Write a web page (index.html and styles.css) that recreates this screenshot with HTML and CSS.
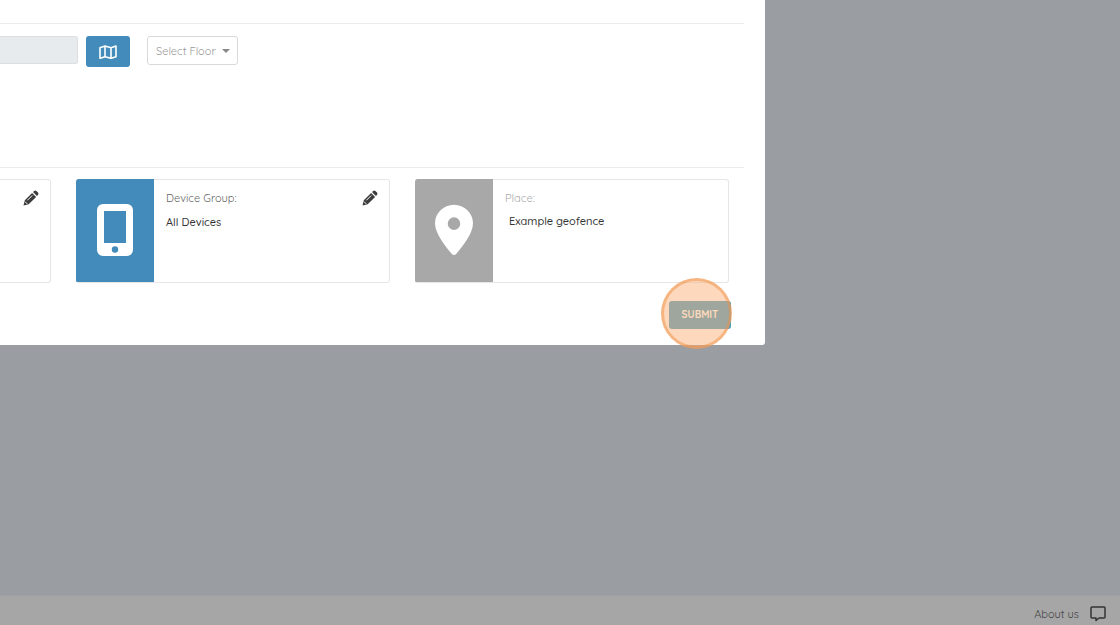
FILE: index.html
```
<!DOCTYPE html>
<html lang="en">
<head>
<meta charset="utf-8">
<meta name="viewport" content="width=device-width, initial-scale=1">
<title>Device alert setup</title>
<link rel="stylesheet" href="styles.css">
</head>
<body>
<main class="modal">
  <section class="location">
    <input class="location-input" type="text" aria-label="Location" disabled>
    <button class="map-button" type="button" aria-label="Open map">
      <svg class="map-icon" viewBox="0 0 18 14" aria-hidden="true"><path d="M1 2.8 6 1v10.7L1 13.3zM6 1l6 1.8v10.5l-6-1.6M12 2.8 17 1v10.7l-5 1.6"/></svg>
    </button>
    <div class="floor">
      <select class="floor-select" aria-label="Select Floor"><option>Select Floor</option></select>
      <svg class="caret" viewBox="0 0 8 4" aria-hidden="true"><path d="M0 0h8L4 4z"/></svg>
    </div>
  </section>
  <section class="cards">
    <article class="card card-end">
      <button class="edit" type="button" aria-label="Edit">
        <svg class="pencil" viewBox="0 0 16 16" aria-hidden="true"><path class="ink" d="M.5 15.5 1.8 10.3 9.1 3l4 4-7.4 7.3zM10 2.1 11.2.9Q12.3.1 13.4 1L15 2.6Q16 3.8 15 4.9L13.9 6z"/><path class="shine" d="M4.4 10.3 9.2 5.5M2.1 11.7l2.2 2.2"/></svg>
      </button>
    </article>
    <article class="card">
      <div class="tile tile-blue">
        <svg class="phone" viewBox="0 0 36 52" aria-hidden="true"><path d="M6 0h24a6 6 0 0 1 6 6v40a6 6 0 0 1-6 6H6a6 6 0 0 1-6-6V6a6 6 0 0 1 6-6zM7 7v32h22V7zM18 42.3a3.2 3.2 0 1 0 0 6.4 3.2 3.2 0 0 0 0-6.4z"/></svg>
      </div>
      <div class="details">
        <h2 class="label">Device Group:</h2>
        <p class="value">All Devices</p>
      </div>
      <button class="edit" type="button" aria-label="Edit device group">
        <svg class="pencil" viewBox="0 0 16 16" aria-hidden="true"><path class="ink" d="M.5 15.5 1.8 10.3 9.1 3l4 4-7.4 7.3zM10 2.1 11.2.9Q12.3.1 13.4 1L15 2.6Q16 3.8 15 4.9L13.9 6z"/><path class="shine" d="M4.4 10.3 9.2 5.5M2.1 11.7l2.2 2.2"/></svg>
      </button>
    </article>
    <article class="card">
      <div class="tile tile-grey">
        <svg class="pin" viewBox="0 0 40 53" aria-hidden="true"><path d="M20 0C31 0 40 8.7 40 19.5 40 30 29 44 22.5 51.5Q20 54 17.5 51.5C11 44 0 30 0 19.5 0 8.7 9 0 20 0zM20 13.2a6.6 6.6 0 1 0 0 13.2 6.6 6.6 0 0 0 0-13.2z"/></svg>
      </div>
      <div class="details">
        <h2 class="label label-muted">Place:</h2>
        <p class="value value-inset">Example geofence</p>
      </div>
    </article>
  </section>
  <div class="actions">
    <div class="submit-wrap">
      <button class="submit" type="submit">SUBMIT</button>
      <span class="highlight"></span>
    </div>
  </div>
</main>
<footer class="footer">
  <a class="about" href="#">About us</a>
  <button class="chat" type="button" aria-label="Feedback">
    <svg class="chat-icon" viewBox="0 0 16 16" aria-hidden="true"><path d="M2 1h12q1 0 1 1v9q0 1-1 1H9L6 14.5V12H2q-1 0-1-1V2q0-1 1-1z"/></svg>
  </button>
</footer>
</body>
</html>
```
FILE: styles.css
```
* { box-sizing: border-box; }

body {
  margin: 0;
  min-height: 100vh;
  display: flex;
  flex-direction: column;
  background: #9a9da1;
  color: #444;
  font-family: Quicksand, Lato, sans-serif;
  font-size: 11px;
  line-height: 16px;
}

button {
  padding: 0;
  border: 0;
  background: none;
  font: inherit;
  cursor: pointer;
}

svg { display: block; }

.modal {
  margin-right: 355px;
  padding: 23px 0 16px;
  background: #fff;
  border-radius: 0 0 3px 0;
}

.location {
  display: flex;
  align-items: flex-start;
  min-height: 144px;
  margin-right: 21px;
  padding-top: 12px;
  border-top: 1px solid #ebebeb;
}

.location-input {
  width: 78px;
  height: 28px;
  border: 1px solid #dcdfe2;
  border-left: 0;
  border-radius: 0 3px 3px 0;
  background: #e7ebee;
}

.map-button {
  display: grid;
  place-items: center;
  width: 44px;
  height: 31px;
  margin: 0 17px 0 8px;
  border-radius: 3px;
  background: #428bbb;
}

.map-icon {
  width: 18px;
  height: 14px;
  fill: none;
  stroke: #fff;
  stroke-width: 1.6;
  stroke-linejoin: round;
}

.floor {
  display: grid;
  align-items: center;
}

.floor-select,
.caret { grid-area: 1 / 1; }

.floor-select {
  appearance: none;
  width: 91px;
  height: 29px;
  padding: 0 8px;
  border: 1px solid #d9d9d9;
  border-radius: 3px;
  background: #fff;
  color: #999;
  font: inherit;
}

.caret {
  width: 8px;
  height: 4px;
  margin-right: 8px;
  justify-self: end;
  fill: #888;
  pointer-events: none;
}

.cards {
  position: relative;
  display: grid;
  grid-template-columns: 51px 1fr 1fr;
  gap: 25px;
  padding: 12px 36px 0 0;
}

.cards::before {
  content: "";
  position: absolute;
  top: 0;
  left: 0;
  right: 21px;
  border-top: 1px solid #ebebeb;
}

.card {
  display: flex;
  min-height: 104px;
  border-radius: 3px;
  box-shadow: inset 0 0 0 1px #e6e6e6;
  overflow: hidden;
}

.card-end {
  border: 1px solid #e6e6e6;
  border-left: 0;
  border-radius: 0 3px 3px 0;
  box-shadow: none;
}

.card-end .edit { margin: 10px 11px 0 auto; }

.tile {
  display: grid;
  justify-items: center;
  align-content: start;
  width: 78px;
  margin-bottom: 1px;
  padding-top: 25px;
}

.tile-blue { background: #428bbb; }
.tile-grey { background: #a8a8a8; }

.phone,
.pin { fill: #fff; fill-rule: evenodd; }

.phone { width: 36px; height: 52px; }
.pin { width: 38px; height: 52px; }

.details { padding: 11px 12px; }

.label,
.value {
  margin: 0;
  font-size: 11px;
}

.label { color: #666; font-weight: 400; }
.label-muted { color: #aaa; }

.value {
  margin-top: 8px;
  color: #333;
  font-weight: 500;
}

.value-inset {
  margin-top: 7px;
  padding-left: 4px;
}

.edit {
  align-self: flex-start;
  margin: 11px 12px 0 auto;
}

.pencil { width: 16px; height: 16px; }
.ink { fill: #3c3c3c; }
.shine { fill: none; stroke: #fff; stroke-width: 1; }

.actions {
  display: flex;
  justify-content: flex-end;
  padding: 18px 34px 0 0;
}

.submit-wrap { position: relative; }

.submit {
  display: block;
  width: 62px;
  height: 28px;
  border-radius: 3px;
  background: #409ac0;
  color: #fff;
  font-size: 10px;
  font-weight: 700;
}

.highlight {
  position: absolute;
  top: -23px;
  left: -8px;
  width: 71px;
  height: 71px;
  border: 3px solid rgba(240, 145, 70, 0.5);
  border-radius: 50%;
  background: rgba(252, 178, 122, 0.5);
  pointer-events: none;
}

.footer {
  display: flex;
  align-items: center;
  justify-content: flex-end;
  gap: 11px;
  min-height: 30px;
  margin-top: auto;
  padding: 6px 14px 0 0;
  border-top: 1px solid #a0a0a0;
  background: #a6a6a6;
}

.about {
  color: #444;
  text-decoration: none;
}

.chat-icon {
  width: 16px;
  height: 16px;
  fill: none;
  stroke: #333;
  stroke-width: 1.5;
  stroke-linejoin: round;
}
```
